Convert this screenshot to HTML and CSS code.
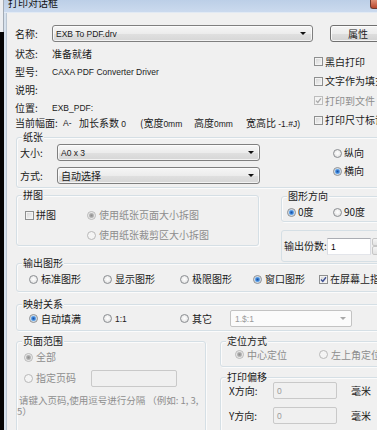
FILE: index.html
```html
<!DOCTYPE html>
<html lang="zh">
<head>
<meta charset="utf-8">
<title>打印对话框</title>
<link rel="stylesheet" href="styles.css">
</head>
<body>
<div class="screen">
  <div class="desk"><div class="desk-top"></div></div>
  <div class="window">
    <div class="titlebar"><span class="title">打印对话框</span><span class="close"></span></div>
    <div class="client">
      <div class="frame"></div>
      <div class="content">
        <div class="name-row">
          <span class="lbl">名称:</span>
          <div class="combo name-combo"><span class="lat">EXB To PDF.drv</span><i class="arrow"></i></div>
          <div class="btn">属性</div>
        </div>

        <div class="info">
          <div class="info-left">
            <div class="irow"><span class="lbl">状态:</span><span>准备就绪</span></div>
            <div class="irow"><span class="lbl">型号:</span><span class="lat">CAXA PDF Converter Driver</span></div>
            <div class="irow"><span class="lbl">说明:</span></div>
            <div class="irow"><span class="lbl">位置:</span><span class="lat">EXB_PDF:</span></div>
            <div class="irow cur">
              <span class="c1">当前幅面:</span><span class="c2 lat">A-</span><span class="c3">加长系数 <span class="lat">0</span></span><span class="c4">(宽度<span class="lat">0mm</span></span><span class="c5">高度<span class="lat">0mm</span></span><span class="c6">宽高比 <span class="lat">-1.#J)</span></span>
            </div>
          </div>
          <div class="info-right">
            <div class="opt ck"><i class="cb"></i>黑白打印</div>
            <div class="opt ck"><i class="cb"></i>文字作为填充</div>
            <div class="opt ck dis"><i class="cb dis"><svg viewBox="0 0 7 7" width="7" height="7"><path d="M1 3.6 L2.8 5.4 L6 1.3" fill="none" stroke="#a9a9a9" stroke-width="1.3"/></svg></i>打印到文件</div>
            <div class="opt ck"><i class="cb"></i>打印尺寸标识</div>
          </div>
        </div>

        <div class="grp paper">
          <span class="glabel">纸张</span>
          <div class="paper-body">
            <div class="paper-rows">
              <div class="prow"><span class="lbl">大小:</span><div class="combo paper-combo"><span class="lat">A0 x 3</span><i class="arrow"></i></div></div>
              <div class="prow"><span class="lbl">方式:</span><div class="combo paper-combo"><span>自动选择</span><i class="arrow"></i></div></div>
            </div>
            <div class="orient">
              <div class="opt"><i class="rb"></i>纵向</div>
              <div class="opt"><i class="rb on"></i>横向</div>
            </div>
          </div>
        </div>

        <div class="row2">
          <div class="grp pintu">
            <span class="glabel">拼图</span>
            <div class="pintu-body">
              <div class="pintu-cb"><div class="opt ck"><i class="cb"></i>拼图</div></div>
              <div class="pintu-rb">
                <div class="opt dis"><i class="rb on dis"></i>使用纸张页面大小拆图</div>
                <div class="opt dis"><i class="rb dis"></i>使用纸张裁剪区大小拆图</div>
              </div>
            </div>
          </div>
          <div class="rcol">
            <div class="grp dir">
              <span class="glabel">图形方向</span>
              <div class="dir-body">
                <div class="opt w46"><i class="rb on"></i>0度</div>
                <div class="opt"><i class="rb"></i>90度</div>
              </div>
            </div>
            <div class="copies">
              <span class="copies-lbl">输出份数:</span>
              <div class="tb copies-tb"><span class="lat">1</span></div>
              <div class="spin"><i class="spin-btn"></i><i class="spin-btn"></i></div>
            </div>
          </div>
        </div>

        <div class="grp out">
          <span class="glabel">输出图形</span>
          <div class="grid5">
            <div class="opt"><i class="rb"></i>标准图形</div>
            <div class="opt"><i class="rb"></i>显示图形</div>
            <div class="opt"><i class="rb"></i>极限图形</div>
            <div class="opt"><i class="rb on"></i>窗口图形</div>
            <div class="opt ck"><i class="cb"><svg viewBox="0 0 7 7" width="7" height="7"><path d="M1 3.6 L2.8 5.4 L6 1.3" fill="none" stroke="#3e4f93" stroke-width="1.4"/></svg></i>在屏幕上指定</div>
          </div>
        </div>

        <div class="grp map">
          <span class="glabel">映射关系</span>
          <div class="grid4">
            <div class="opt"><i class="rb on"></i>自动填满</div>
            <div class="opt"><i class="rb"></i><span class="lat">1:1</span></div>
            <div class="opt"><i class="rb"></i>其它</div>
            <div class="combo-dis"><span class="lat">1.$:1</span><i class="arrow gray"></i></div>
          </div>
        </div>

        <div class="row3">
          <div class="grp range">
            <span class="glabel">页面范围</span>
            <div class="range-row"><div class="opt dis"><i class="rb on dis"></i>全部</div></div>
            <div class="range-row second"><div class="opt dis w67"><i class="rb dis"></i>指定页码</div><div class="tb dis page-tb"></div></div>
            <p class="hint"><span class="hint-l1">请键入页码,使用逗号进行分隔 （例如: 1, 3,</span><br>5）</p>
          </div>
          <div class="rcol2">
            <div class="grp pos">
              <span class="glabel">定位方式</span>
              <div class="pos-row">
                <div class="opt dis w84"><i class="rb on dis"></i>中心定位</div>
                <div class="opt dis"><i class="rb dis"></i>左上角定位</div>
              </div>
            </div>
            <div class="grp offset">
              <span class="glabel">打印偏移</span>
              <div class="off-row first"><span class="off-lbl">X方向:</span><div class="tb dis off-tb"><span class="lat">0</span></div><span class="mm">毫米</span></div>
              <div class="off-row second"><span class="off-lbl">Y方向:</span><div class="tb dis off-tb"><span class="lat">0</span></div><span class="mm">毫米</span></div>
            </div>
          </div>
        </div>
      </div>
    </div>
  </div>
</div>
</body>
</html>
```

FILE: styles.css
```css
* { box-sizing: border-box; }
html, body { margin: 0; padding: 0; }
body {
  width: 377px;
  height: 430px;
  overflow: hidden;
  background: #000;
  font-family: "Noto Sans CJK SC", "Noto Sans", sans-serif;
  font-size: 10px;
  line-height: 12px;
  color: #1b1b1b;
}
i { font-style: normal; }
.lat { font-family: "Liberation Sans", Arial, sans-serif; font-size: 8.5px; }

.screen { display: flex; width: 377px; height: 430px; overflow: hidden; }
.desk { width: 4px; flex: none; background: #050505; }
.desk-top { height: 32px; background: #eceef1; border-right: 1px solid #a3abb5; }
.window { flex: 1; display: flex; flex-direction: column; min-width: 0; }

.titlebar {
  height: 13px;
  flex: none;
  display: flex;
  justify-content: space-between;
  background: linear-gradient(#bccfe7, #cbdaee);
  border-bottom: 1px solid #e2eaf4;
  overflow: hidden;
}
.title { font-size: 10px; line-height: 10px; margin: -2px 0 0 4px; color: #111; }
.close {
  width: 7px; height: 9px;
  background: linear-gradient(#de8f76, #b9472d);
  border-left: 1px solid #6e3a30;
  border-bottom: 1px solid #6e3a30;
  border-radius: 0 0 0 3px;
}

.client { flex: 1; display: flex; background: #f0f0f0; }
.frame { width: 3px; flex: none; background: #d6e1ed; border-right: 1px solid #bac6d3; }
.content { width: 420px; flex: none; padding-top: 12px; }

/* generic controls */
.lbl { width: 37px; flex: none; white-space: nowrap; }
.opt { display: flex; align-items: center; gap: 3px; white-space: nowrap; }
.opt.ck { gap: 2px; }
.opt.dis { color: #8d8d8d; }

.rb {
  width: 9px; height: 9px; flex: none;
  border: 1px solid #8b8e92;
  border-radius: 50%;
  background: radial-gradient(circle at 50% 45%, #ffffff 0, #f2f2f2 2px, #d6d6d6 5px);
}
.rb.on {
  background: radial-gradient(circle at 50% 50%, #16509f 0, #3f82d6 1.5px, #86bdf0 2.5px, #e6e6e6 3.2px, #f6f6f6 4.5px);
}
.rb.dis { border-color: #b8b8b8; background: #f4f4f4; }
.rb.on.dis {
  background: radial-gradient(circle at 50% 50%, #8f8f8f 0, #a9a9a9 1.6px, #c9c9c9 2.5px, #f2f2f2 3.2px, #f6f6f6 4.5px);
}

.cb {
  width: 9px; height: 9px; flex: none;
  border: 1px solid #8e8f8f;
  background: linear-gradient(135deg, #d4d4d4, #f8f8f8);
  box-shadow: inset 0 0 0 1px #f3f3f3;
  display: flex; align-items: center; justify-content: center;
}
.cb.dis { border-color: #bdbdbd; background: #f3f3f3; }
.cb svg { display: block; }

.combo {
  height: 17px;
  display: flex;
  align-items: center;
  justify-content: space-between;
  padding: 0 5px 0 3px;
  border: 1px solid #7f7f7f;
  border-radius: 3px;
  background: linear-gradient(#f6f6f6 0%, #ececec 50%, #e0e0e0 51%, #d6d6d6 100%);
  box-shadow: inset 0 0 0 1px rgba(255,255,255,0.7);
  white-space: nowrap;
}
.arrow {
  width: 0; height: 0; flex: none;
  border-left: 3px solid transparent;
  border-right: 3px solid transparent;
  border-top: 3px solid #111;
}
.arrow.gray { border-top-color: #a8a8a8; }

.btn {
  width: 56px; height: 17px; flex: none;
  margin-left: 17px;
  display: flex; align-items: center; justify-content: center;
  border: 1px solid #707070;
  border-radius: 3px;
  background: linear-gradient(#f4f4f4 0%, #ececec 50%, #dedede 51%, #d2d2d2 100%);
  box-shadow: inset 0 0 0 1px rgba(255,255,255,0.75);
}

.tb {
  height: 17px; flex: none;
  border: 1px solid #abadb3;
  border-left-color: #dadce2;
  border-right-color: #dadce2;
  border-bottom-color: #e3e5ea;
  background: #fff;
  padding: 1px 0 0 3px;
  line-height: 12px;
}
.tb.dis { border: 1px solid #c9c9c9; border-radius: 2px; background: #f0f0f0; color: #9a9a9a; }

/* group boxes */
.grp {
  border: 1px solid #d5dfe5;
  border-radius: 3px;
  box-shadow: inset 1px 1px 0 #fbfbfb, 1px 1px 0 #fbfbfb;
}
.glabel {
  display: block;
  width: max-content;
  height: 12px;
  margin: -7px 0 0 5px;
  padding: 0 1px;
  background: #f0f0f0;
  line-height: 12px;
  color: #1b1b1b;
}

/* top section */
.name-row { display: flex; align-items: center; height: 17px; padding-left: 8px; }
.name-combo { width: 261px; flex: none; padding-right: 6px; }

.info { display: flex; margin-top: 3px; padding-left: 8px; }
.info-left { width: 299px; flex: none; }
.irow { height: 18px; display: flex; align-items: center; white-space: nowrap; }
.irow.cur { height: 12px; }
.c1 { width: 48px; flex: none; }
.c2 { width: 16px; flex: none; }
.c3 { width: 61px; flex: none; }
.c4 { width: 54px; flex: none; }
.c5 { width: 52px; flex: none; }
.c6 { flex: none; }
.info-right { width: 110px; flex: none; padding-top: 7px; }
.info-right .opt { height: 19.5px; }

/* paper */
.paper { margin: 7px 0 0 9px; padding-bottom: 3px; }
.paper-body { display: flex; margin-top: 1px; }
.paper-rows { padding-left: 3px; display: flex; flex-direction: column; gap: 6px; }
.prow { display: flex; align-items: center; height: 17px; }
.paper-combo { width: 203px; flex: none; }
.orient { margin-left: 73px; display: flex; flex-direction: column; }
.orient .opt { height: 18px; gap: 2px; }

/* pintu + direction */
.row2 { display: flex; align-items: flex-start; margin: 7px 0 0 9px; }
.pintu { width: 243px; flex: none; }
.pintu-body { display: flex; margin-top: 4px; }
.pintu-cb { width: 70px; flex: none; padding-left: 8px; }
.pintu-cb .opt, .pintu-rb .opt { height: 20px; }
.rcol { margin-left: 22px; width: 130px; flex: none; }
.dir { margin-top: 1px; }
.dir-body { display: flex; align-items: center; height: 18px; margin-top: 1px; padding-left: 5px; }
.dir-body .opt { gap: 2px; }
.w46 { width: 46px; flex: none; }
.copies {
  margin-top: 8px;
  height: 32px;
  display: flex;
  align-items: center;
  padding-left: 2px;
  border: 1px solid #d5dfe5;
  border-radius: 3px;
}
.copies-lbl { width: 43px; flex: none; white-space: nowrap; }
.copies-tb { width: 44px; color: #000; }
.spin { width: 9px; height: 17px; margin-left: 1px; display: flex; flex-direction: column; flex: none; }
.spin-btn { flex: 1; border: 1px solid #c6c6c6; background: linear-gradient(#f4f4f4, #e2e2e2); border-radius: 2px; }

/* output / mapping */
.out { margin: 1px 0 0 9px; padding-bottom: 2px; }
.grid5 {
  display: grid;
  grid-template-columns: 74px 77px 73px 66px auto;
  align-items: center;
  height: 20px;
  padding-left: 12px;
}
.map { margin: 12px 0 0 9px; padding-bottom: 3px; }
.grid4 {
  display: grid;
  grid-template-columns: 74px 77px 50px auto;
  align-items: center;
  height: 17px;
  padding-left: 12px;
}
.combo-dis {
  width: 122px; height: 17px;
  display: flex; align-items: center; justify-content: space-between;
  padding: 0 5px 0 4px;
  border: 1px solid #c3c3c3;
  border-radius: 2px;
  background: #fbfbfb;
  color: #9a9a9a;
}

/* bottom */
.row3 { display: flex; align-items: flex-start; margin: 10px 0 0 9px; }
.range { width: 190px; height: 120px; flex: none; }
.range-row { display: flex; align-items: center; height: 20px; padding-left: 7px; }
.range-row.second { margin-top: 1px; }
.w67 { width: 67px; flex: none; }
.page-tb { width: 86px; }
.hint {
  margin: 7px 0 0;
  line-height: 11px;
  font-size: 9.5px;
  white-space: nowrap;
  color: #8e8e8e;
}
.hint-l1 { padding-left: 2px; }
.rcol2 { margin-left: 14px; width: 200px; flex: none; }
.pos { padding-bottom: 4px; }
.pos-row { display: flex; align-items: center; height: 15px; padding-left: 14px; }
.w84 { width: 84px; flex: none; }
.offset { margin-top: 10px; height: 80px; }
.off-row { display: flex; align-items: center; height: 17px; padding-left: 8px; }
.off-row.first { margin-top: -1px; }
.off-row.second { margin-top: 8px; }
.off-lbl { width: 44px; flex: none; white-space: nowrap; }
.off-tb { width: 64px; }
.mm { margin-left: 14px; white-space: nowrap; }
```
